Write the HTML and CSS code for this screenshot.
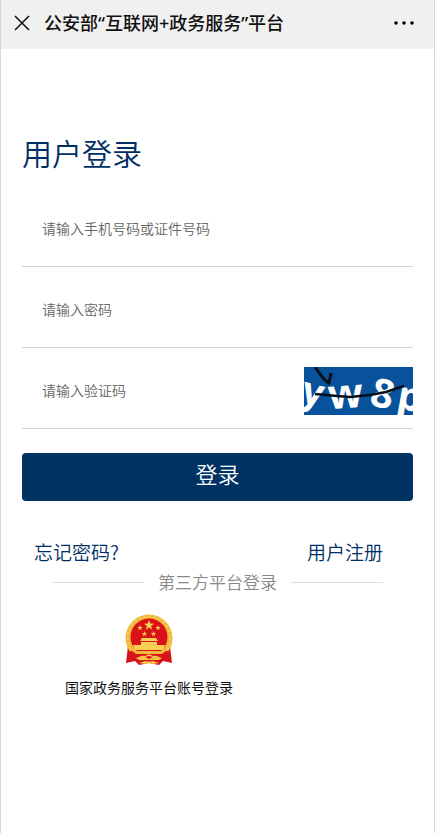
FILE: index.html
```html
<!DOCTYPE html>
<html lang="zh-CN">
<head>
<meta charset="utf-8">
<meta name="viewport" content="width=device-width, initial-scale=1">
<title>公安部“互联网+政务服务”平台</title>
<link rel="stylesheet" href="styles.css">
</head>
<body>
<header class="topbar">
  <button class="icon-button" type="button" aria-label="关闭">
    <svg width="16" height="16" viewBox="0 0 16 16" fill="none" stroke="#111" stroke-width="1.5"><path d="M1 1l14 14M15 1L1 15"/></svg>
  </button>
  <div class="topbar-title">公安部“互联网+政务服务”平台</div>
  <button class="icon-button" type="button" aria-label="更多">
    <svg width="20" height="4" viewBox="0 0 20 4" fill="#000"><circle cx="2" cy="2" r="1.8"/><circle cx="10" cy="2" r="1.8"/><circle cx="18" cy="2" r="1.8"/></svg>
  </button>
</header>
<main class="page">
  <h1 class="heading">用户登录</h1>
  <form>
    <div class="field"><input class="field-input" type="text" aria-label="手机号码或证件号码" placeholder="请输入手机号码或证件号码"></div>
    <div class="field"><input class="field-input" type="password" aria-label="密码" placeholder="请输入密码"></div>
    <div class="field">
      <input class="field-input" type="text" aria-label="验证码" placeholder="请输入验证码">
      <svg class="captcha" width="109" height="48" viewBox="0 0 109 48" role="img" aria-label="验证码图片">
        <rect width="109" height="48" fill="#07529a"/>
        <g class="captcha-text">
          <text x="-3" y="38" font-size="38" transform="rotate(14 8 30)">y</text>
          <text x="24" y="41" font-size="41" transform="rotate(-4 42 32)">w</text>
          <text x="67" y="41" font-size="40" transform="rotate(14 80 28)">8</text>
          <text x="93" y="43" font-size="40" transform="rotate(10 104 34)">p</text>
        </g>
        <path d="M11 0c4 5 7 12 14 16l2-10" fill="none" stroke="#071018" stroke-width="3"/>
        <path d="M11 27l22 2 13 1 20-2 16-3 18-6" fill="none" stroke="#071018" stroke-width="2.4"/>
      </svg>
    </div>
    <button class="submit" type="submit">登录</button>
  </form>
  <nav class="links">
    <a href="#forgot">忘记密码?</a>
    <a href="#register">用户注册</a>
  </nav>
  <div class="divider">第三方平台登录</div>
  <a class="provider" href="#gov">
    <svg width="50" height="52" viewBox="0 0 50 52" aria-hidden="true">
      <path d="M4 32L2 49l9-2 4 4 10-2 10 2 4-4 9 2-2-17z" fill="#d7141a"/>
      <circle cx="25" cy="24" r="23.5" fill="#f0b73a"/>
      <circle cx="25" cy="24" r="21.5" fill="none" stroke="#f7cb55" stroke-width="2" stroke-dasharray="3 2"/>
      <circle cx="25" cy="23" r="18.5" fill="#db1119"/>
      <path d="M25 6l1.300 3.600 3.800.1-3 2.300 1.100 3.700-3.200-2.200-3.200 2.200 1.100-3.700-3-2.300 3.800-.1z" fill="#f7cf52"/>
      <g fill="#f7cf52">
        <path d="M16 11l.7 1.900 2 .1-1.600 1.200.6 2-1.700-1.200-1.700 1.200.6-2-1.600-1.200 2-.1z"/>
        <path d="M34 11l.7 1.900 2 .1-1.600 1.200.6 2-1.700-1.200-1.700 1.200.6-2-1.600-1.200 2-.1z"/>
        <path d="M20.500 17l.7 1.900 2 .1-1.600 1.200.6 2-1.700-1.200-1.700 1.200.6-2-1.600-1.200 2-.1z"/>
        <path d="M29.500 17l.7 1.900 2 .1-1.600 1.200.6 2-1.700-1.200-1.700 1.200.6-2-1.600-1.200 2-.1z"/>
        <path d="M18 24h14l2 3H16zM17 28h16v3H17zM9 31h32l-2 5H11z"/>
      </g>
      <path d="M6 37h38l-1 10H7z" fill="#d7141a"/>
      <path d="M8 37h34l-4 3H12z" fill="#f0b73a"/>
      <path d="M12 44c4-1 5-3 9-2l4-2 4 2c4-1 5 1 9 2l-3 2H15z" fill="#f5c443"/>
      <path d="M21 43l4-1 4 1-4 2z" fill="#d7141a"/>
      <path d="M15 49l6-2 4 1 4-1 6 2-6 1-4-1-4 1z" fill="#f5c443"/>
    </svg>
    <span>国家政务服务平台账号登录</span>
  </a>
</main>
</body>
</html>
```

FILE: styles.css
```css
* { box-sizing: border-box; }

body {
  margin: 0;
  min-height: 100vh;
  border: solid #d6d6d6;
  border-width: 0 1px;
  background: #fff;
  color: #111;
  font-family: "Noto Sans CJK SC", sans-serif;
  font-weight: 350;
}

button, input { font: inherit; }

a { color: inherit; text-decoration: none; }

svg { display: block; flex: none; }

.topbar {
  display: flex;
  align-items: center;
  gap: 14px;
  padding: 9px 20px 12px 13px;
  background: #f0f0f0;
}

.topbar-title {
  flex: 1;
  font-family: "Noto Sans", "Noto Sans CJK SC", sans-serif;
  font-size: 18px;
  font-weight: 500;
  line-height: 28px;
  white-space: nowrap;
}

.icon-button {
  padding: 0;
  border: 0;
  background: none;
}

.page { padding: 83px 21px 0; }

.heading {
  margin: 0 0 14px;
  color: #002f66;
  font-size: 30px;
  font-weight: 350;
  line-height: 40px;
}

.field {
  display: flex;
  align-items: center;
  height: 81px;
  padding-top: 6px;
  border-bottom: 1px solid #d4d4d4;
}

.field-input {
  flex: 1;
  min-width: 0;
  padding: 0 20px 2px;
  border: 0;
  outline: 0;
  background: none;
  font-size: 14px;
  line-height: 24px;
}

.field-input::placeholder { color: #666; opacity: 1; }

.captcha-text {
  fill: #fff;
  font-family: "Open Sans", sans-serif;
  font-weight: 700;
}

.submit {
  width: 100%;
  margin-top: 24px;
  padding: 4px 0 12px;
  border: 0;
  border-radius: 4px;
  background: #003364;
  color: #fff;
  font-size: 22px;
  line-height: 32px;
}

.links {
  display: flex;
  justify-content: space-between;
  margin-top: 36px;
  padding: 0 30px 0 12px;
  color: #002f66;
  font-size: 19px;
  line-height: 30px;
}

.divider {
  display: flex;
  align-items: center;
  gap: 14px;
  padding: 0 30px;
  color: #888;
  font-size: 17px;
  line-height: 30px;
}

.divider::before,
.divider::after {
  content: "";
  flex: 1;
  height: 1px;
  background: #dedede;
}

.provider {
  display: flex;
  flex-direction: column;
  align-items: center;
  gap: 10px;
  width: 65%;
  margin-top: 17px;
  font-size: 14px;
  font-weight: 400;
  line-height: 22px;
}
```
